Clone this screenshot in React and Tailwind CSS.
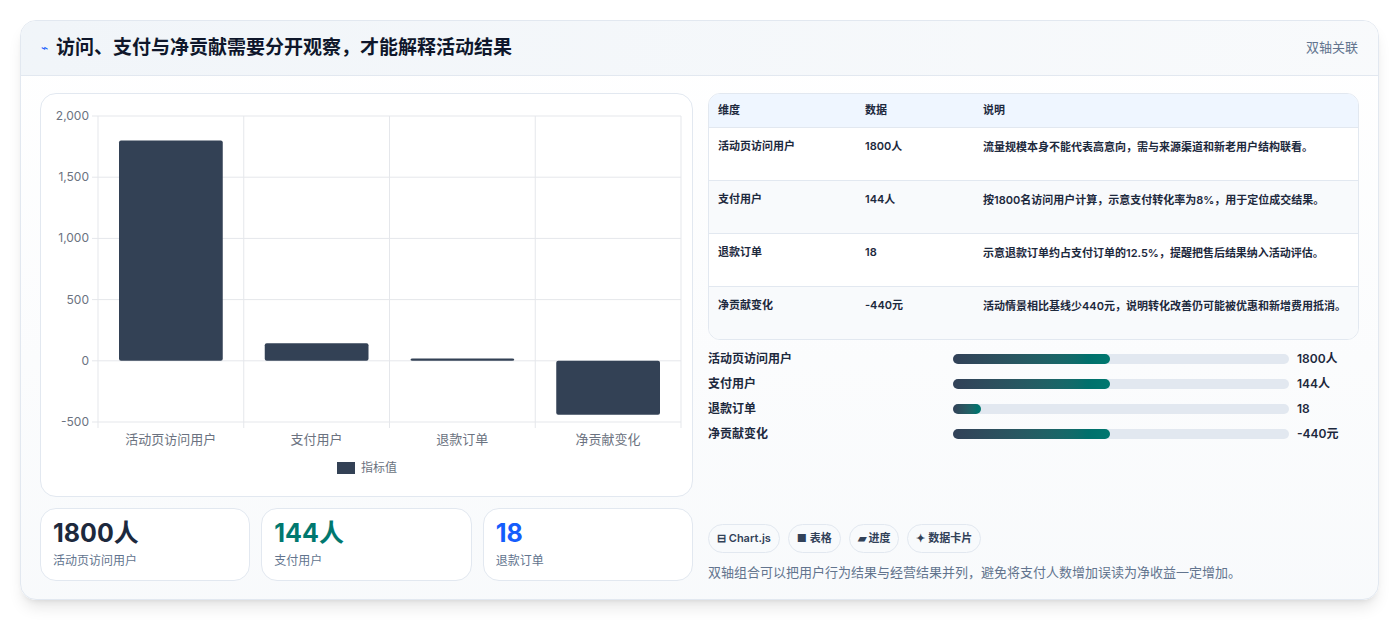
const rows = [
  ['活动页访问用户', '1800人', '流量规模本身不能代表高意向，需与来源渠道和新老用户结构联看。'],
  ['支付用户', '144人', '按1800名访问用户计算，示意支付转化率为8%，用于定位成交结果。'],
  ['退款订单', '18', '示意退款订单约占支付订单的12.5%，提醒把售后结果纳入活动评估。'],
  ['净贡献变化', '-440元', '活动情景相比基线少440元，说明转化改善仍可能被优惠和新增费用抵消。'],
];

const bars = [
  ['活动页访问用户', 157, '1800人'],
  ['支付用户', 157, '144人'],
  ['退款订单', 28, '18'],
  ['净贡献变化', 157, '-440元'],
];

const values = [1800, 144, 18, -440];
const cats = ['活动页访问用户', '支付用户', '退款订单', '净贡献变化'];

function Chart() {
  // plot area in local coords of 652x403 panel
  const x0 = 57, x1 = 640, yTop = 22, yBot = 328;
  const y = (v) => yTop + ((2000 - v) / 2500) * (yBot - yTop);
  const cw = (x1 - x0) / 4;
  return (
    <svg width="652" height="403" className="block">
      {[2000, 1500, 1000, 500, 0, -500].map((t) => (
        <g key={t}>
          <line x1={x0 - 6} x2={x1} y1={y(t)} y2={y(t)} stroke="#e5e7eb" />
          <text x={x0 - 9} y={y(t) + 4} textAnchor="end" fontSize="12" fill="#6b7280">
            {t.toLocaleString('en-US')}
          </text>
        </g>
      ))}
      {[0, 1, 2, 3, 4].map((i) => (
        <line key={i} x1={x0 + i * cw} x2={x0 + i * cw} y1={yTop} y2={yBot + 6} stroke="#e5e7eb" />
      ))}
      {values.map((v, i) => {
        const top = Math.min(y(v), y(0));
        const h = Math.max(Math.abs(y(v) - y(0)), 2);
        return (
          <rect key={i} x={x0 + i * cw + 21} y={top} width={cw - 42} height={h} rx="2" fill="#334155" />
        );
      })}
      {cats.map((c, i) => (
        <text key={c} x={x0 + i * cw + cw / 2} y={yBot + 22} textAnchor="middle" fontSize="13" fill="#6b7280">
          {c}
        </text>
      ))}
      <rect x="296" y="368" width="18" height="12" fill="#334155" />
      <text x="320" y="378" fontSize="12" fill="#6b7280">指标值</text>
    </svg>
  );
}

export default function App() {
  return (
    <div className="w-[1399px] h-[621px] bg-white p-5 text-slate-800" style={{ fontFamily: 'Inter, "Noto Sans CJK SC", sans-serif' }}>
      <div className="h-[580px] rounded-2xl border border-slate-200 bg-gradient-to-b from-white to-slate-50 shadow-lg overflow-hidden">
        <div className="h-[55px] flex items-center justify-between px-5 bg-gradient-to-r from-slate-100 to-slate-50 border-b border-slate-200">
          <div className="flex items-center gap-2">
            <span className="text-blue-600 text-xs">⌁</span>
            <h1 className="text-[19px] font-bold text-slate-900">访问、支付与净贡献需要分开观察，才能解释活动结果</h1>
          </div>
          <span className="text-[13px] text-slate-500">双轴关联</span>
        </div>
        <div className="flex gap-[15px] px-[19px] pt-[17px]">
          <div className="w-[653px] flex flex-col gap-[11px]">
            <div className="h-[404px] rounded-2xl border border-slate-200 bg-white overflow-hidden">
              <Chart />
            </div>
            <div className="grid grid-cols-3 gap-[11px]">
              {[['1800人', 'text-slate-800', '活动页访问用户'], ['144人', 'text-teal-700', '支付用户'], ['18', 'text-blue-600', '退款订单']].map(([v, c, l]) => (
                <div key={l} className="h-[73px] rounded-2xl border border-slate-200 bg-white px-3 pt-2">
                  <div className={`text-[25px] font-bold leading-8 ${c}`}>{v}</div>
                  <div className="text-xs text-slate-500 mt-1">{l}</div>
                </div>
              ))}
            </div>
          </div>
          <div className="flex-1 flex flex-col">
            <div className="rounded-xl border border-slate-200 bg-white overflow-hidden">
              <table className="w-full text-[11px]">
                <thead>
                  <tr className="bg-blue-50 text-slate-800 text-left h-[33px]">
                    <th className="pl-[9px] w-[156px] font-bold">维度</th>
                    <th className="w-[118px] font-bold">数据</th>
                    <th className="font-bold">说明</th>
                  </tr>
                </thead>
                <tbody>
                  {rows.map(([a, b, c], i) => (
                    <tr key={a} className={`border-t border-slate-200 h-[53px] align-top ${i % 2 ? 'bg-slate-50' : 'bg-white'}`}>
                      <td className="pl-[9px] pt-[10px] font-semibold">{a}</td>
                      <td className="pt-[10px] font-semibold">{b}</td>
                      <td className="pt-[10px] pr-3 font-semibold leading-[18px]">{c}</td>
                    </tr>
                  ))}
                </tbody>
              </table>
            </div>
            <div className="flex flex-col gap-[9px] mt-[11px]">
              {bars.map(([l, w, v]) => (
                <div key={l} className="flex items-center h-4 text-xs font-semibold">
                  <span className="w-[245px]">{l}</span>
                  <div className="w-[336px] h-[10px] rounded-full bg-slate-200">
                    <div className="h-full rounded-full bg-gradient-to-r from-slate-700 to-teal-700" style={{ width: w }} />
                  </div>
                  <span className="ml-2">{v}</span>
                </div>
              ))}
            </div>
            <div className="flex gap-[8px] mt-[82px]">
              {['⊟ Chart.js', '■ 表格', '▰ 进度', '✦ 数据卡片'].map((t) => (
                <span key={t} className="h-[29px] px-[8px] flex items-center rounded-full border border-slate-200 bg-slate-50 text-[11px] font-semibold text-slate-700">{t}</span>
              ))}
            </div>
            <p className="mt-[10px] text-[13px] text-slate-500">双轴组合可以把用户行为结果与经营结果并列，避免将支付人数增加误读为净收益一定增加。</p>
          </div>
        </div>
      </div>
    </div>
  );
}
